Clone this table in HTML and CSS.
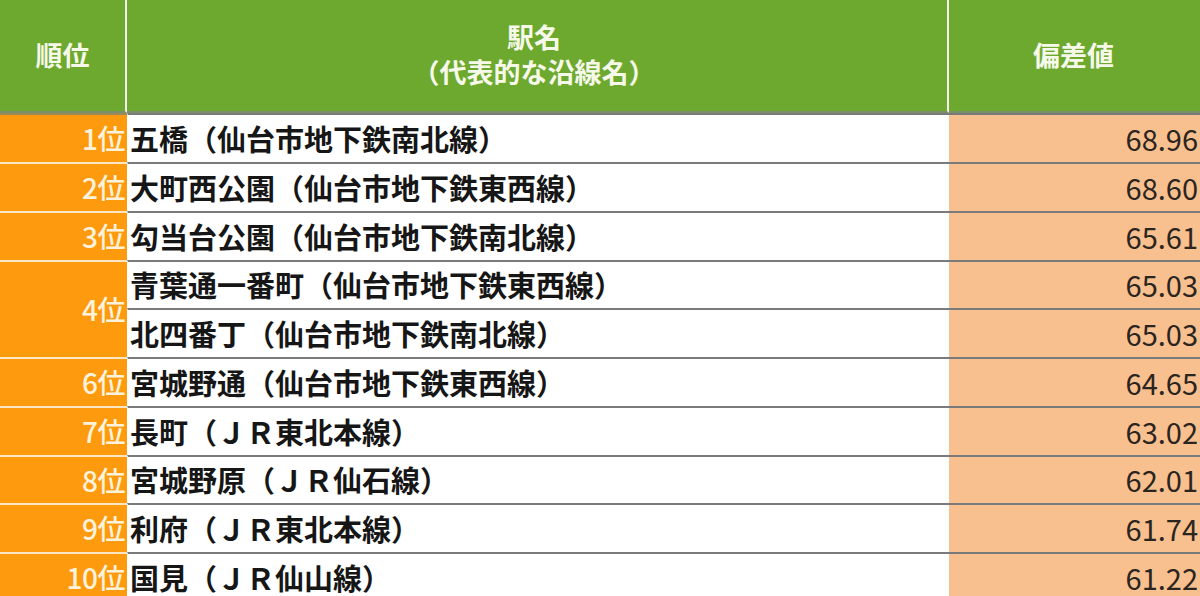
FILE: index.html
```html
<!DOCTYPE html>
<html lang="ja">
<head>
<meta charset="utf-8">
<link rel="stylesheet" href="styles.css">
</head>
<body>
<div class="table">
  <div class="h h-rank">順位</div>
  <div class="h h-name"><span class="line">駅名</span><span class="line">（代表的な沿線名）</span></div>
  <div class="h h-score">偏差値</div>

  <div class="rank first r1">1位</div>
  <div class="name first">五橋（仙台市地下鉄南北線）</div>
  <div class="score first">68.96</div>

  <div class="rank r2">2位</div>
  <div class="name">大町西公園（仙台市地下鉄東西線）</div>
  <div class="score">68.60</div>

  <div class="rank r3">3位</div>
  <div class="name">勾当台公園（仙台市地下鉄南北線）</div>
  <div class="score">65.61</div>

  <div class="rank r4">4位</div>
  <div class="name">青葉通一番町（仙台市地下鉄東西線）</div>
  <div class="score">65.03</div>
  <div class="name">北四番丁（仙台市地下鉄南北線）</div>
  <div class="score">65.03</div>

  <div class="rank r6">6位</div>
  <div class="name">宮城野通（仙台市地下鉄東西線）</div>
  <div class="score">64.65</div>

  <div class="rank r7">7位</div>
  <div class="name">長町（ＪＲ東北本線）</div>
  <div class="score">63.02</div>

  <div class="rank r8">8位</div>
  <div class="name">宮城野原（ＪＲ仙石線）</div>
  <div class="score">62.01</div>

  <div class="rank r9">9位</div>
  <div class="name">利府（ＪＲ東北本線）</div>
  <div class="score">61.74</div>

  <div class="rank r10">10位</div>
  <div class="name">国見（ＪＲ仙山線）</div>
  <div class="score">61.22</div>
</div>
</body>
</html>
```

FILE: styles.css
```css
html, body {
  margin: 0;
  padding: 0;
  background: #ffffff;
  overflow: hidden;
}

.table {
  display: grid;
  grid-template-columns: 127px 822px 251px;
  grid-template-rows: 113px 49px 49px 49px 48px 49px 49px 49px 48px 49px 49px;
  width: 1200px;
  font-family: "Noto Sans CJK JP", "Noto Sans", sans-serif;
}

.h {
  background: #6ea92f;
  color: #f6f9ea;
  font-weight: 700;
  font-size: 27px;
  display: flex;
  flex-direction: column;
  align-items: center;
  justify-content: center;
  text-align: center;
  border-bottom: 2px solid #7b8e66;
  box-sizing: border-box;
  line-height: 1;
}

.h-rank {
  border-right: 2px solid #f4f4ee;
  padding-bottom: 3px;
}

.h-name {
  border-right: 2px solid #f4f4ee;
  padding-bottom: 4px;
  padding-right: 6px;
  font-size: 27px;
  gap: 8px;
}

.line {
  display: block;
}

.h-score {
  padding-bottom: 3px;
  padding-right: 2px;
}

.rank,
.name,
.score {
  display: flex;
  align-items: center;
  box-sizing: border-box;
  border-top: 2px solid #7a7a7a;
  font-size: 28px;
  line-height: 1;
  padding-bottom: 1px;
  white-space: nowrap;
}

.rank {
  background: #fd9a0e;
  color: #fdf2dc;
  font-weight: 500;
  justify-content: flex-end;
  padding-right: 2px;
  border-top-color: #fbe6c6;
  grid-column: 1;
  letter-spacing: -0.5px;
}

.rank.first {
  border-top-color: #9a8a5e;
}

.r4 {
  grid-row: span 2;
}

.name {
  background: #ffffff;
  color: #161616;
  font-weight: 700;
  padding-left: 2px;
  grid-column: 2;
  border-left: 1px solid #ffffff;
  font-size: 29px;
}

.score {
  background: #f8bf8f;
  color: #2b2520;
  font-weight: 400;
  justify-content: flex-end;
  padding-right: 2px;
  grid-column: 3;
  font-size: 29px;
}
```
